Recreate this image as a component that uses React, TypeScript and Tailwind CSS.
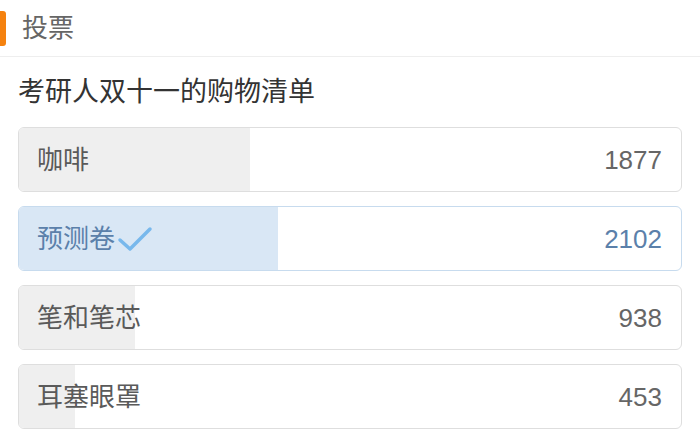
const options = [
  { label: '咖啡', count: 1877, chosen: false },
  { label: '预测卷', count: 2102, chosen: true },
  { label: '笔和笔芯', count: 938, chosen: false },
  { label: '耳塞眼罩', count: 453, chosen: false },
]

const total = options.reduce((sum, o) => sum + o.count, 0)

function Check() {
  return (
    <svg width="36" height="28" viewBox="0 0 36 28" className="ml-[2px]">
      <path d="M3 15 L13 24 L33 4" fill="none" stroke="#78b8ec" strokeWidth="3.5" strokeLinecap="round" strokeLinejoin="round" />
    </svg>
  )
}

export default function App() {
  return (
    <div className="w-[700px] h-[433px] bg-white overflow-hidden font-['Liberation_Sans','Noto_Sans_CJK_SC',sans-serif]">
      {/* header */}
      <div className="flex items-center h-[57px] border-b border-[#eeeeee]">
        <div className="w-[6px] h-[35px] bg-[#f5820f] rounded-r-[3px]" />
        <span className="ml-[16px] text-[26px] text-[#666666] leading-none">投票</span>
      </div>

      <div className="px-[18px]">
        <div className="h-[70px] flex items-center text-[27px] text-[#333333] leading-none">考研人双十一的购物清单</div>

        <div className="flex flex-col gap-[14px]">
          {options.map(o => (
            <div
              key={o.label}
              className={`relative h-[65px] rounded-[6px] border overflow-hidden ${o.chosen ? 'border-[#c7dbee]' : 'border-[#dedede]'}`}
            >
              <div
                className={`absolute left-0 top-0 bottom-0 ${o.chosen ? 'bg-[#d9e7f5]' : 'bg-[#efefef]'}`}
                style={{ width: `${(o.count / total) * 100}%` }}
              />
              <div className="relative flex items-center justify-between h-full pl-[18px] pr-[19px]">
                <div className="flex items-center">
                  <span className={`text-[26px] leading-none ${o.chosen ? 'text-[#5b80aa]' : 'text-[#5a5a5a]'}`}>{o.label}</span>
                  {o.chosen && <Check />}
                </div>
                <span className={`text-[26px] leading-none ${o.chosen ? 'text-[#5b80aa]' : 'text-[#666666]'}`}>{o.count}</span>
              </div>
            </div>
          ))}
        </div>
      </div>
    </div>
  )
}
